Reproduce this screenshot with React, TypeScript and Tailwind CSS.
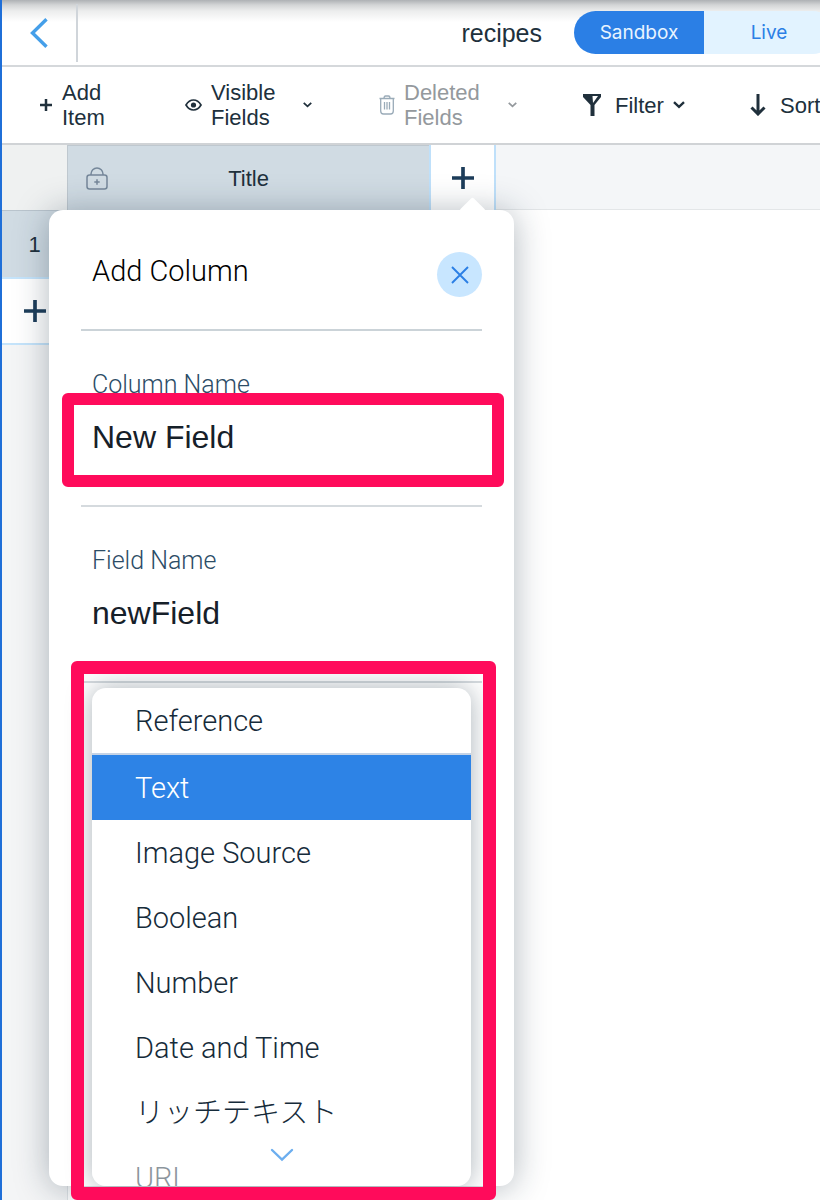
import React from 'react';

const FIELD_TYPES = [
  'Image Source',
  'Boolean',
  'Number',
  'Date and Time',
  'リッチテキスト',
  'URL',
];

function PlusIcon({ className, width = 4 }: { className: string; width?: number }) {
  return (
    <svg viewBox="0 0 24 24" className={className} stroke="currentColor" strokeWidth={width} aria-hidden="true">
      <path d="M12 0v24M0 12h24" />
    </svg>
  );
}

function ChevronIcon({ className }: { className: string }) {
  return (
    <svg viewBox="0 0 12 8" className={className} fill="none" stroke="currentColor" strokeWidth="2.4" aria-hidden="true">
      <path d="M1 1.2l5 4.6 5-4.6" />
    </svg>
  );
}

function Header() {
  return (
    <header className="flex h-[67px] items-center overflow-hidden border-b-2 border-[#d5d8db] bg-[linear-gradient(to_bottom,#aeb1b4_0px,#d3d5d6_5px,#eceded_11px,#fff_22px)]">
      <button type="button" aria-label="Back" className="flex h-[58px] w-[76px] shrink-0 items-center justify-center border-r-2 border-[#d0d5da]">
        <svg viewBox="0 0 18 30" className="h-[30px] w-[18px]" fill="none" stroke="#459fe9" strokeWidth="3.4" aria-hidden="true">
          <path d="M16.5 1.3L2.5 15l14 13.7" />
        </svg>
      </button>
      <h1 className="ml-auto text-[25px] leading-8 text-[#20303c]">recipes</h1>
      <div className="-mr-[14px] ml-8 flex shrink-0 overflow-hidden rounded-full font-[Inter,sans-serif] text-[19px] leading-[43px]">
        <button type="button" className="w-[130px] bg-[#2b7fe5] text-[#e8f4ff]">Sandbox</button>
        <button type="button" className="w-[130px] bg-[#e2f3ff] text-[#2b7fe5]">Live</button>
      </div>
    </header>
  );
}

function Toolbar() {
  return (
    <div className="flex h-[78px] items-center overflow-hidden border-b-2 border-[#d0d3d6] bg-white pl-[38px] text-left text-[22px] leading-[25px] text-[#20303c]">
      <button type="button" className="flex w-[145px] shrink-0 items-center gap-[10px] text-left">
        <PlusIcon className="h-3 w-3" width={5} />
        <span className="w-[60px]">Add Item</span>
      </button>
      <button type="button" className="flex w-[194px] shrink-0 items-center text-left">
        <svg viewBox="0 0 17 12" className="h-3 w-[17px]" aria-hidden="true">
          <path d="M1 6C3 2.6 5.500 1 8.500 1S14 2.600 16 6C14 9.400 11.500 11 8.500 11S3 9.400 1 6Z" fill="none" stroke="currentColor" strokeWidth="1.700" />
          <circle cx="8.500" cy="6" r="2.600" fill="currentColor" />
        </svg>
        <span className="ml-[9px] w-[92px]">Visible Fields</span>
        <ChevronIcon className="h-[6px] w-[9px]" />
      </button>
      <button type="button" disabled className="flex w-[204px] shrink-0 items-center text-left text-[#94999d]">
        <svg viewBox="0 0 16 20" className="h-5 w-4" fill="none" stroke="#9aabb8" strokeWidth="1.300" aria-hidden="true">
          <path d="M0.500 3.500h15M5 3.300Q5 1 6.500 1h3Q11 1 11 3.300M1.700 3.500V16Q1.700 19 4.500 19h7Q14.300 19 14.300 16V3.500" />
          <path d="M5.500 7v7.500M8 7v7.500M10.500 7v7.500" />
        </svg>
        <span className="ml-[9px] w-[104px]">Deleted Fields</span>
        <ChevronIcon className="h-[6px] w-[9px]" />
      </button>
      <button type="button" className="flex w-[167px] shrink-0 items-center">
        <svg viewBox="0 0 18 22" className="h-[22px] w-[18px]" fill="currentColor" aria-hidden="true">
          <path d="M0 0h18v3l-6.500 8v11h-4V11L0 3Z" />
          <path d="M9.500 2h5.500L10 9Z" fill="#fff" />
        </svg>
        <span className="ml-[14px] mr-[9px]">Filter</span>
        <ChevronIcon className="h-2 w-3" />
      </button>
      <button type="button" className="flex shrink-0 items-center gap-[14px]">
        <svg viewBox="0 0 16 22" className="h-[22px] w-4" fill="none" stroke="currentColor" strokeWidth="3" aria-hidden="true">
          <path d="M8 0v20M1.500 13.500L8 20l6.500-6.500" />
        </svg>
        <span>Sort</span>
      </button>
    </div>
  );
}

function Field({ id, label, value, highlighted = false }: { id: string; label: string; value: string; highlighted?: boolean }) {
  return (
    <div className="relative h-[176px] border-b-2 border-[#d5dade] px-[11px] pt-[38px]">
      <label htmlFor={id} className="block font-[Roboto,sans-serif] text-[25px] leading-[32px] font-light text-[#2c4c66]">
        {label}
      </label>
      <input id={id} defaultValue={value} className="mt-4 block w-full bg-transparent text-[32px] leading-[40px] text-[#162029] outline-none" />
      {highlighted && (
        <div className="pointer-events-none absolute -left-[19px] -right-[22px] top-[62px] h-[94px] rounded-[6px] border-[12px] border-[#ff0b5b]" />
      )}
    </div>
  );
}

function TypeList() {
  return (
    <div className="relative mx-[43px] mt-[5px]">
      <ul role="listbox" aria-label="Field type" className="h-[498px] overflow-hidden rounded-[14px] bg-white font-[Roboto,'Noto_Sans_CJK_JP',sans-serif] text-[29px] leading-[67px] font-light text-[#162b3a] shadow-[0_0_26px_rgba(22,45,61,0.36)]">
        <li role="option" aria-selected="false" className="border-b-2 border-[#c5d3e6]">
          <button type="button" className="block h-[65px] w-full pl-[43px] text-left">Reference</button>
        </li>
        <li role="option" aria-selected="true">
          <button type="button" className="block h-[65px] w-full bg-[#2d83e6] pl-[43px] text-left text-white">Text</button>
        </li>
        {FIELD_TYPES.map((type) => (
          <li key={type} role="option" aria-selected="false">
            <button type="button" className="block h-[65px] w-full pl-[43px] text-left">{type}</button>
          </li>
        ))}
      </ul>
      <div className="pointer-events-none absolute inset-x-0 bottom-0 flex h-[63px] justify-center rounded-b-[14px] bg-white/50 pt-[25px]">
        <svg viewBox="0 0 24 14" className="h-[14px] w-6" fill="none" stroke="#6caeef" strokeWidth="2.400" strokeLinecap="round" aria-hidden="true">
          <path d="M2 2l10 9.500L22 2" />
        </svg>
      </div>
      <div className="pointer-events-none absolute -bottom-[14px] -left-[21px] -right-[25px] -top-[27px] rounded-[6px] border-[13px] border-[#ff0b5b]" />
    </div>
  );
}

function AddColumnPanel() {
  return (
    <section aria-label="Add Column" className="absolute -right-[20px] top-full z-10 w-[465px] rounded-[14px] bg-white text-left shadow-[0_2px_34px_rgba(22,45,61,0.34)]">
      <div className="absolute -top-[9px] right-[32px] size-[19px] rotate-45 rounded-[2px] bg-white" />
      <div className="relative mx-8">
        <div className="flex h-[121px] justify-between border-b-2 border-[#cbd3d8] pl-[11px]">
          <h2 className="mt-[43px] h-9 font-[Roboto,sans-serif] text-[29px] leading-9 font-light text-black">Add Column</h2>
          <button type="button" aria-label="Close" className="mt-[42px] flex size-[45px] items-center justify-center rounded-full bg-[#c8e6ff] text-[#2b7fe5]">
            <svg viewBox="0 0 18 18" className="size-[18px]" fill="none" stroke="currentColor" strokeWidth="1.900" aria-hidden="true">
              <path d="M1 1l16 16M17 1L1 17" />
            </svg>
          </button>
        </div>
        <Field id="column-name" label="Column Name" value="New Field" highlighted />
        <Field id="field-name" label="Field Name" value="newField" />
      </div>
      <TypeList />
    </section>
  );
}

export default function App() {
  return (
    <div className="flex min-h-screen flex-col overflow-hidden border-l-2 border-[#1f6fd8] bg-white font-['Liberation_Sans',Arial,sans-serif]">
      <Header />
      <Toolbar />
      <main className="relative flex grow flex-col">
        <div className="relative z-10 flex h-[65px] items-stretch">
          <div className="w-[65px] shrink-0 bg-[#eff1f1]" />
          <div className="relative flex w-[362px] shrink-0 items-center justify-center border-l border-t border-[#bfc8cf] bg-[#d0dbe3] text-[22px] text-[#20303c]">
            <svg viewBox="0 0 22 23" className="absolute left-[18px] h-[23px] w-[22px]" fill="none" stroke="#75879a" strokeWidth="1.500" aria-hidden="true">
              <rect x="1" y="8" width="20" height="14" rx="2.500" />
              <path d="M5 8V7a6 6 0 0112 0v1M11 12.300v5.400M8.300 15h5.400" />
            </svg>
            Title
          </div>
          <div className="relative w-[67px] shrink-0 border-x-2 border-[#bfe0fa] bg-white text-[#1d3d5a]">
            <button type="button" aria-label="Add column" className="flex h-full w-full items-center justify-center">
              <PlusIcon className="size-[22px]" />
            </button>
            <AddColumnPanel />
          </div>
          <div className="grow border-b border-[#e3e6e8] bg-[#f4f6f8]" />
        </div>
        <div className="flex w-[66px] grow flex-col border-r border-[#dfe3e6] bg-[#f4f5f6] text-[#20303c]">
          <div className="flex h-[67px] items-center justify-center border-t border-[#b9c4cd] bg-[#d0dbe3] text-[22px]">1</div>
          <button type="button" aria-label="Add row" className="flex h-[68px] items-center justify-center border-y-2 border-[#c5e4fb] bg-white text-[#1d3d5a]">
            <PlusIcon className="size-[22px]" />
          </button>
        </div>
      </main>
    </div>
  );
}
